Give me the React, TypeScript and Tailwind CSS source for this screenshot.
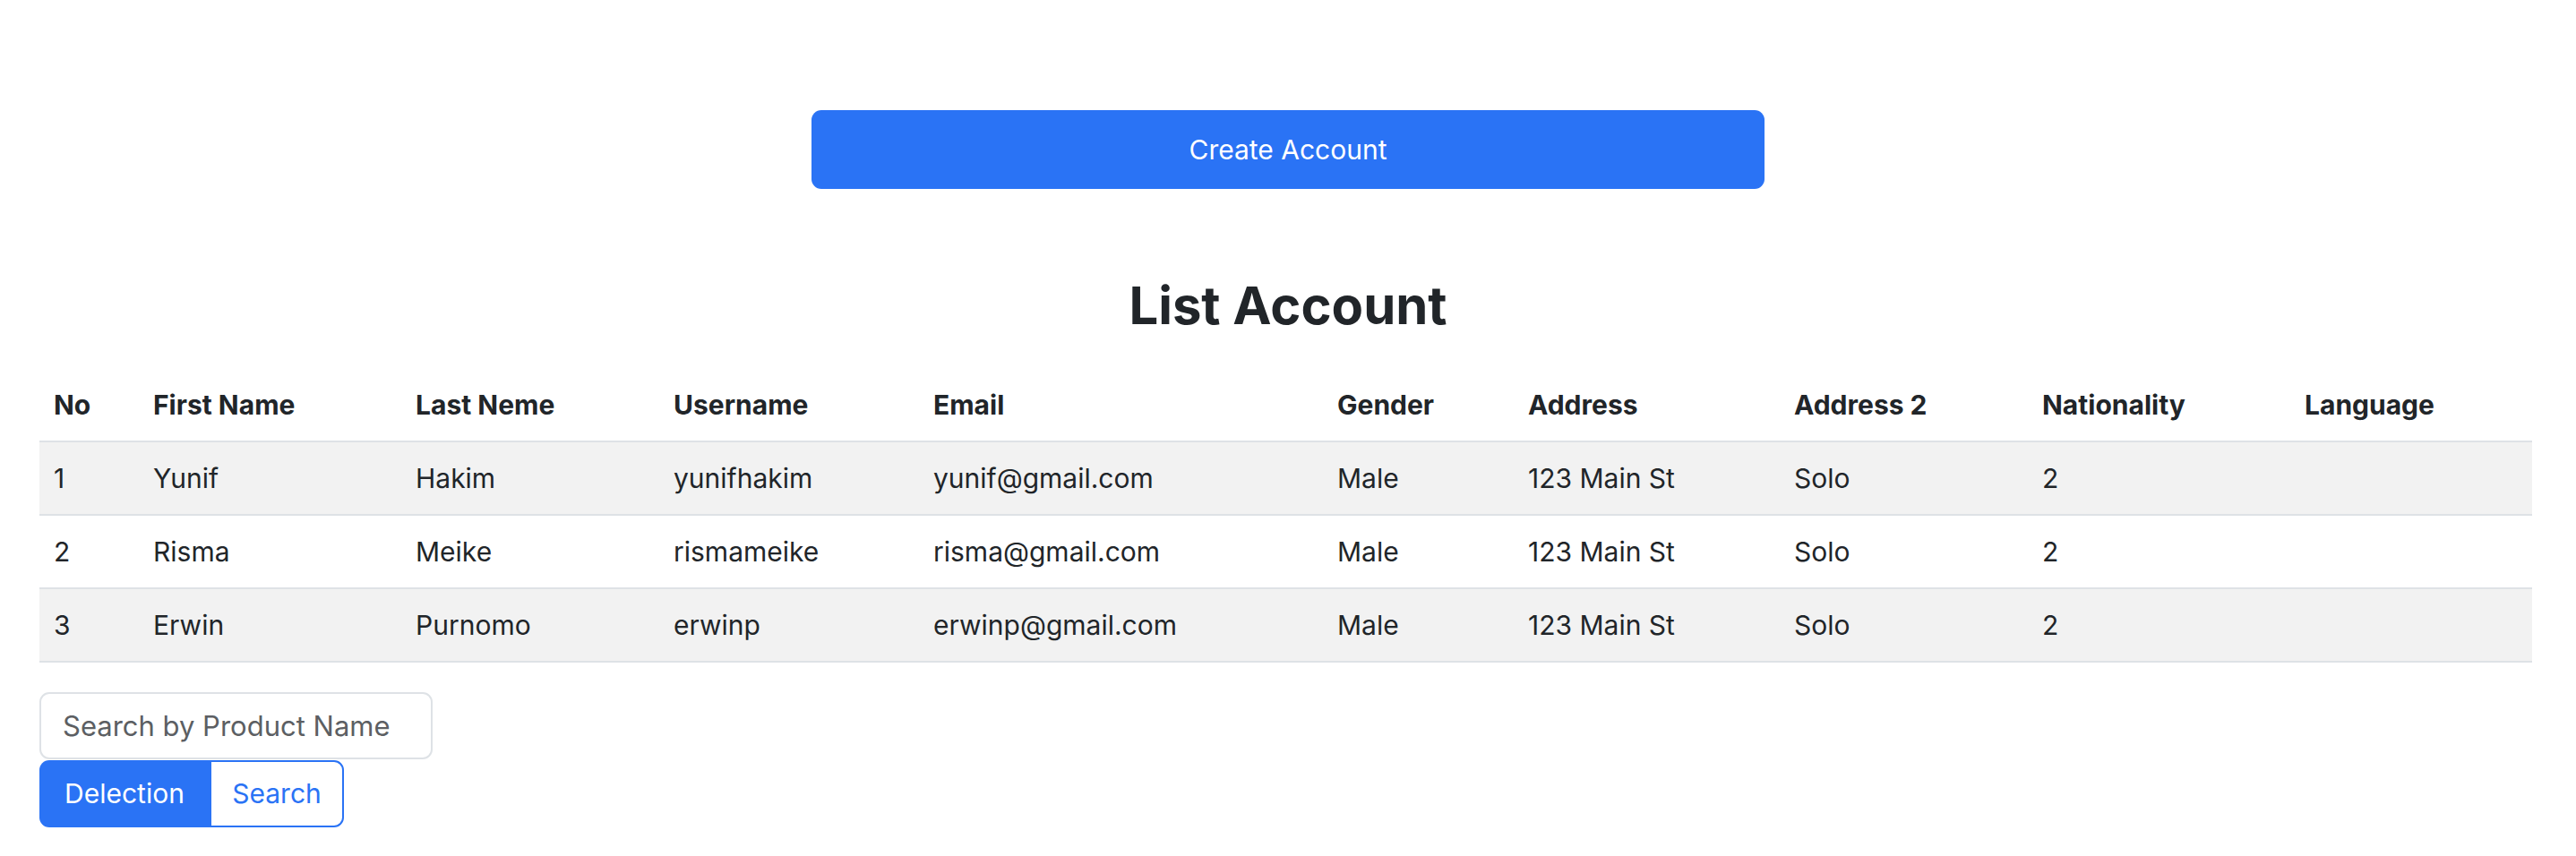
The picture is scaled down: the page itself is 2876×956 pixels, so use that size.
import React from "react";

const COLUMNS = [
  { label: "No", width: "w-[111px]" },
  { label: "First Name", width: "w-[293px]" },
  { label: "Last Neme", width: "w-[288px]" },
  { label: "Username", width: "w-[290px]" },
  { label: "Email", width: "w-[451px]" },
  { label: "Gender", width: "w-[213px]" },
  { label: "Address", width: "w-[297px]" },
  { label: "Address 2", width: "w-[277px]" },
  { label: "Nationality", width: "w-[293px]" },
  { label: "Language", width: "w-[270px]" },
];

const ACCOUNTS = [
  { no: 1, first: "Yunif", last: "Hakim", username: "yunifhakim", email: "yunif@gmail.com", gender: "Male", address: "123 Main St", address2: "Solo", nationality: "2", language: "" },
  { no: 2, first: "Risma", last: "Meike", username: "rismameike", email: "risma@gmail.com", gender: "Male", address: "123 Main St", address2: "Solo", nationality: "2", language: "" },
  { no: 3, first: "Erwin", last: "Purnomo", username: "erwinp", email: "erwinp@gmail.com", gender: "Male", address: "123 Main St", address2: "Solo", nationality: "2", language: "" },
];

export default function App() {
  return (
    <div className="min-h-screen bg-white font-[Inter,sans-serif] text-[30px] leading-[44px] text-[#212529]">
      <div className="flex justify-center pt-[123px]">
        <button className="h-[88px] w-[1064px] rounded-[11px] bg-[#2a73f5] text-white">
          Create Account
        </button>
      </div>

      <h2 className="mt-[96px] mb-[35px] text-center text-[58px] leading-[1.2] font-bold">
        List Account
      </h2>

      <div className="px-[44px]">
        <table className="w-[2783px] table-fixed border-collapse text-left">
          <thead>
            <tr className="border-b-2 border-[#dee2e6]">
              {COLUMNS.map((c) => (
                <th key={c.label} className={`${c.width} px-[16px] py-[18px] font-bold`}>
                  {c.label}
                </th>
              ))}
            </tr>
          </thead>
          <tbody>
            {ACCOUNTS.map((a, i) => (
              <tr
                key={a.no}
                className={`border-b-2 border-[#dee2e6] ${i % 2 === 0 ? "bg-[#f2f2f2]" : "bg-white"}`}
              >
                <td className="px-[16px] py-[18px]">{a.no}</td>
                <td className="px-[16px] py-[18px]">{a.first}</td>
                <td className="px-[16px] py-[18px]">{a.last}</td>
                <td className="px-[16px] py-[18px]">{a.username}</td>
                <td className="px-[16px] py-[18px]">{a.email}</td>
                <td className="px-[16px] py-[18px]">{a.gender}</td>
                <td className="px-[16px] py-[18px]">{a.address}</td>
                <td className="px-[16px] py-[18px]">{a.address2}</td>
                <td className="px-[16px] py-[18px]">{a.nationality}</td>
                <td className="px-[16px] py-[18px]">{a.language}</td>
              </tr>
            ))}
          </tbody>
        </table>

        <div className="mt-[33px] flex flex-col items-start">
          <input
            type="text"
            placeholder="Search by Product Name"
            className="h-[75px] w-[439px] rounded-[11px] border-2 border-[#dee2e6] px-[24px] text-[31px] placeholder:text-[#5c5f63] outline-none"
          />
          <div className="mt-[1px] flex h-[75px]">
            <button className="w-[190px] rounded-l-[11px] bg-[#2a73f5] text-white">
              Delection
            </button>
            <button className="w-[150px] rounded-r-[11px] border-2 border-[#2a73f5] bg-white text-[#2a73f5]">
              Search
            </button>
          </div>
        </div>
      </div>
    </div>
  );
}
